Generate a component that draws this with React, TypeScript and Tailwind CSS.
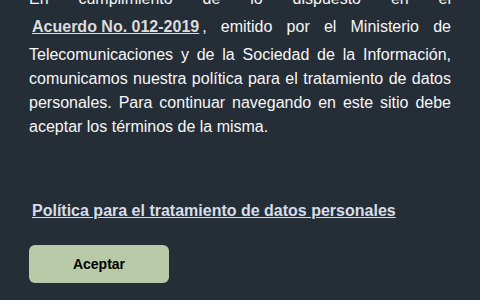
import React from 'react';

export default function App() {
  return (
    <div className="h-[300px] w-[480px] overflow-hidden bg-[#252d37] font-['Liberation_Sans',Arial,sans-serif]">
      <div className="-mt-[13px] px-[29px]">
        <p className="text-justify text-[16px] leading-6 text-[#f7f7f7]">
          En cumplimiento de lo dispuesto en el{' '}
          <a href="#" className="inline-block px-[3px] py-1 font-bold text-[#dcdcdc] underline">
            Acuerdo No. 012-2019
          </a>
          , emitido por el Ministerio de Telecomunicaciones y de la Sociedad de la Información, comunicamos nuestra
          política para el tratamiento de datos personales. Para continuar navegando en este sitio debe aceptar los
          términos de la misma.
        </p>

        <a href="#" className="mt-[60px] block pl-[3px] text-[16px] font-bold leading-6 text-[#d6dee8] underline">
          Política para el tratamiento de datos personales
        </a>

        <button className="mt-[22px] h-[38px] w-[140px] rounded-md bg-[#b8c9a8] text-[14px] font-bold text-black">
          Aceptar
        </button>
      </div>
    </div>
  );
}
